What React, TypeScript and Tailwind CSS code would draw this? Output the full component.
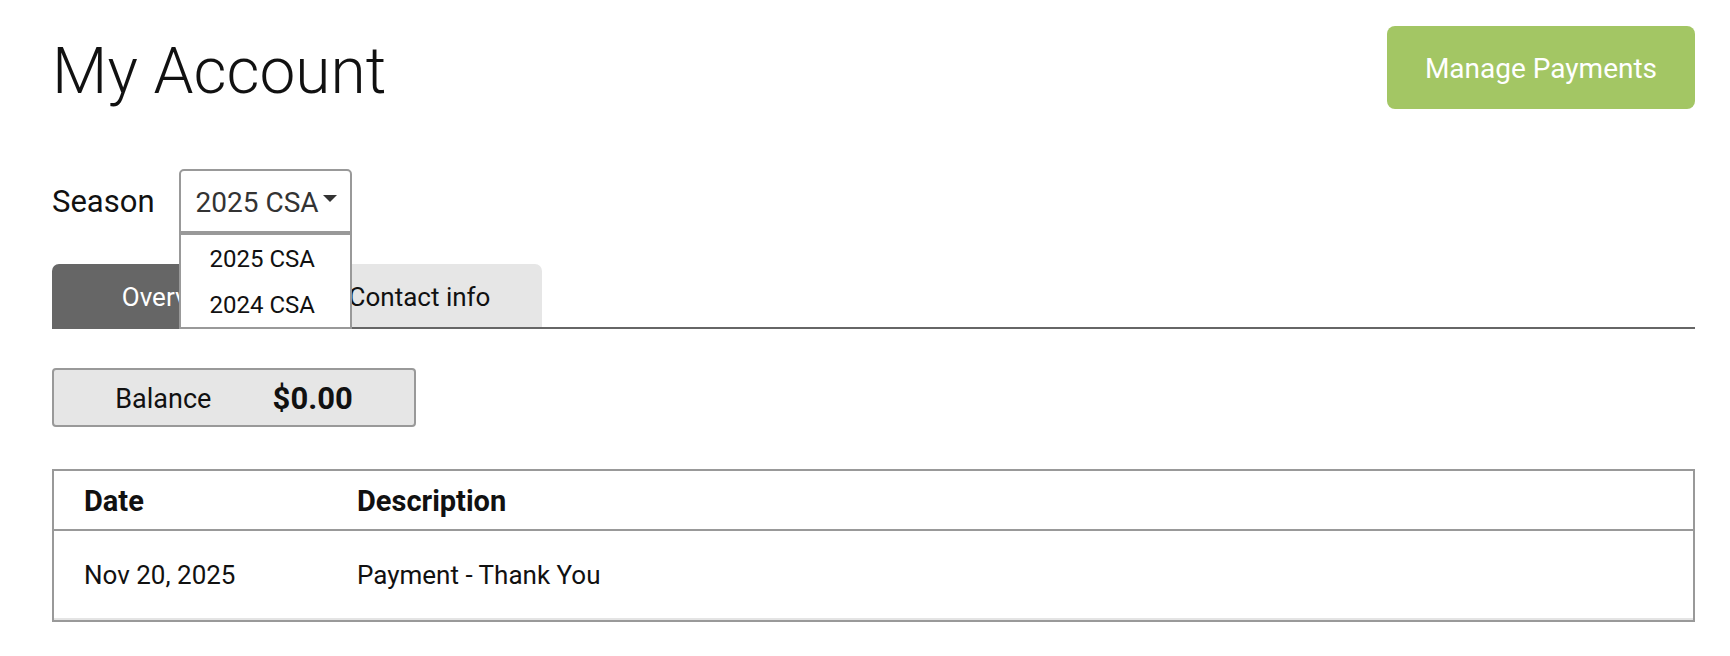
export default function App() {
  const seasons = ["2025 CSA", "2024 CSA"]

  return (
    <div className="min-h-screen bg-white pl-[52px] pr-[35px] pt-[26px] font-['Roboto',sans-serif] text-[#111]">
      {/* Header */}
      <header className="flex items-start justify-between">
        <h1 className="mt-[8px] text-[64px] font-light leading-[75px]">My Account</h1>
        <button className="h-[83px] w-[308px] rounded-[8px] bg-[#a3c664] pt-[2px] text-[28px] text-white">
          Manage Payments
        </button>
      </header>

      {/* Season picker (open) */}
      <div className="mt-[60px] flex items-center gap-[24px]">
        <span className="pt-[2px] text-[31px]">Season</span>
        <div className="relative">
          <div className="flex h-[64px] w-[173px] items-center rounded-t-[5px] border-2 border-[#999] pl-[15px] pt-[3px] text-[28px] text-[#333]">
            2025 CSA
            <span className="ml-[4px] mb-[8px] h-0 w-0 border-x-[7px] border-t-[7px] border-x-transparent border-t-[#333]" />
          </div>
          <ul className="absolute left-0 top-full z-10 w-full border-2 border-[#999] bg-white">
            {seasons.map((s) => (
              <li key={s} className="flex h-[46px] items-center pl-[29px] pt-[2px] text-[24px] text-[#111]">
                {s}
              </li>
            ))}
          </ul>
        </div>
      </div>

      {/* Tabs */}
      <div className="mt-[31px] flex border-b-2 border-[#666]">
        <div className="flex h-[63px] w-[245px] items-center justify-center rounded-t-[7px] bg-[#666] pt-[3px] text-[26px] text-white">
          Overview
        </div>
        <div className="flex h-[63px] w-[245px] items-center justify-center rounded-t-[7px] bg-[#e6e6e6] pt-[3px] text-[26px] text-[#111]">
          Contact info
        </div>
      </div>

      {/* Balance */}
      <div className="mt-[39px] flex h-[59px] w-[364px] items-center justify-evenly rounded-[4px] border-2 border-[#999] bg-[#e6e6e6] pt-[3px]">
        <span className="text-[27px]">Balance</span>
        <span className="text-[31px] font-bold">$0.00</span>
      </div>

      {/* Transactions */}
      <div className="mt-[42px] border-2 border-[#999]">
        <div className="grid h-[60px] grid-cols-[303px_1fr] items-center border-b-2 border-[#999] pt-[4px] text-[29px] font-bold">
          <div className="pl-[30px]">Date</div>
          <div>Description</div>
        </div>
        <div className="grid h-[89px] grid-cols-[303px_1fr] items-center border-b-2 border-[#e4e4e4] pt-[2px] text-[26px]">
          <div className="pl-[30px]">Nov 20, 2025</div>
          <div>Payment - Thank You</div>
        </div>
      </div>
    </div>
  )
}
